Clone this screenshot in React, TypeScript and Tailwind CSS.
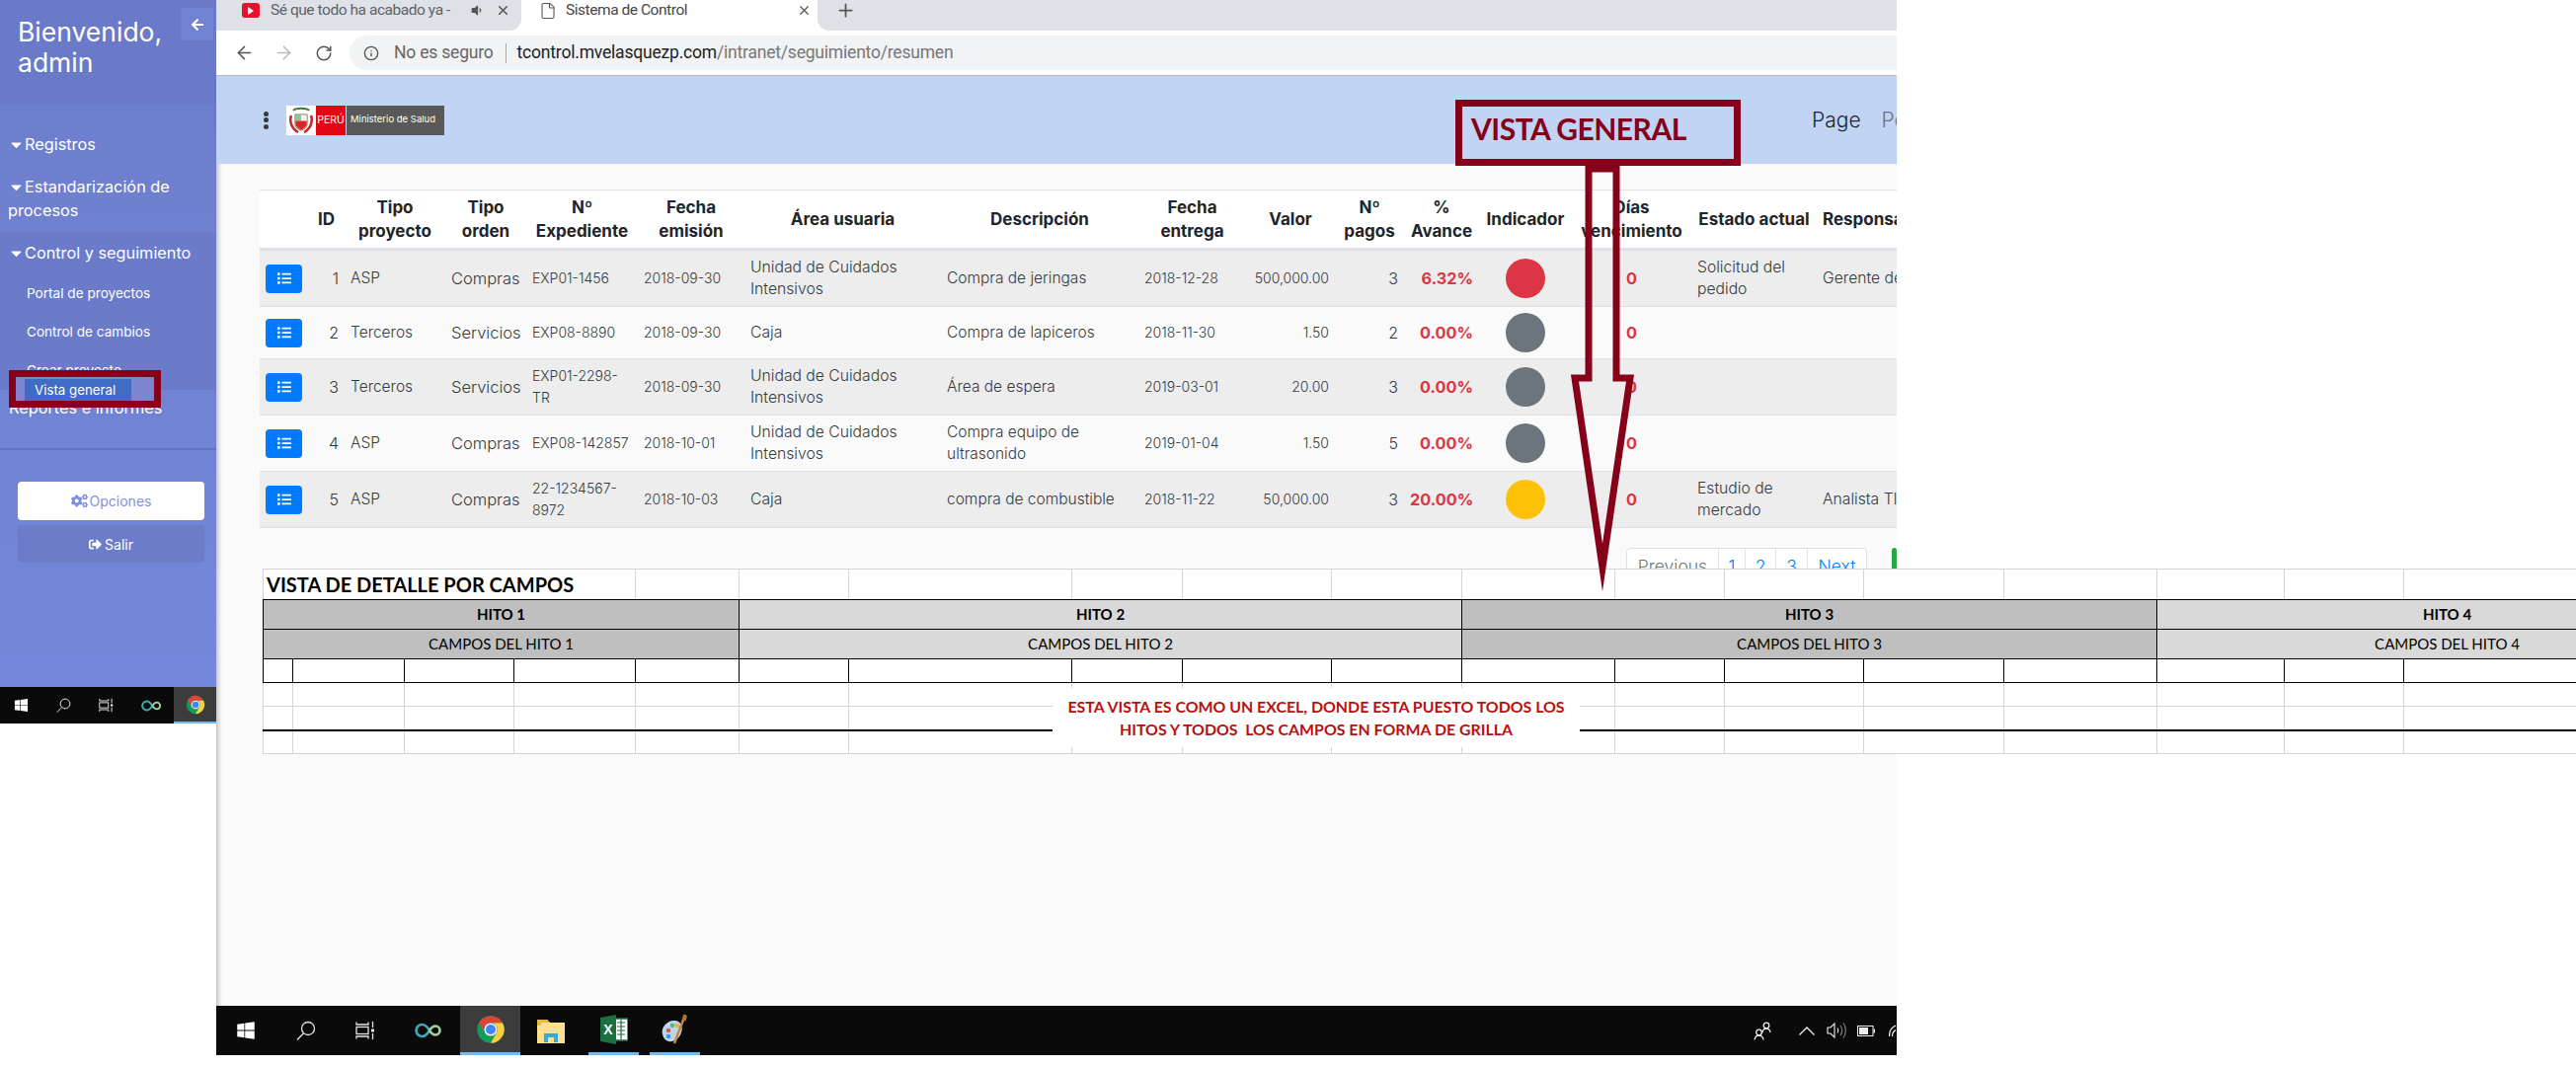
import { Fragment } from 'react';
import { ArrowLeft, ArrowRight, File, Info, Plus, RotateCw, X } from 'lucide-react';
import { FaArrowLeft, FaCaretDown, FaCogs, FaList, FaSignOutAlt, FaVolumeDown, FaWindows } from 'react-icons/fa';

type Row = {
  id: number;
  tipo: string;
  orden: string;
  exp: string;
  emision: string;
  area: string;
  desc: string;
  entrega: string;
  valor: string;
  pagos: number;
  avance: string;
  color: string;
  estado: string;
  resp: string;
};

const UCI = 'Unidad de Cuidados\nIntensivos';

const rows: Row[] = [
  { id: 1, tipo: 'ASP', orden: 'Compras', exp: 'EXP01-1456', emision: '2018-09-30', area: UCI, desc: 'Compra de jeringas', entrega: '2018-12-28', valor: '500,000.00', pagos: 3, avance: '6.32%', color: 'bg-[#dc3545]', estado: 'Solicitud del\npedido', resp: 'Gerente de compras' },
  { id: 2, tipo: 'Terceros', orden: 'Servicios', exp: 'EXP08-8890', emision: '2018-09-30', area: 'Caja', desc: 'Compra de lapiceros', entrega: '2018-11-30', valor: '1.50', pagos: 2, avance: '0.00%', color: 'bg-[#6c757d]', estado: '', resp: '' },
  { id: 3, tipo: 'Terceros', orden: 'Servicios', exp: 'EXP01-2298-\nTR', emision: '2018-09-30', area: UCI, desc: 'Área de espera', entrega: '2019-03-01', valor: '20.00', pagos: 3, avance: '0.00%', color: 'bg-[#6c757d]', estado: '', resp: '' },
  { id: 4, tipo: 'ASP', orden: 'Compras', exp: 'EXP08-142857', emision: '2018-10-01', area: UCI, desc: 'Compra equipo de\nultrasonido', entrega: '2019-01-04', valor: '1.50', pagos: 5, avance: '0.00%', color: 'bg-[#6c757d]', estado: '', resp: '' },
  { id: 5, tipo: 'ASP', orden: 'Compras', exp: '22-1234567-\n8972', emision: '2018-10-03', area: 'Caja', desc: 'compra de combustible', entrega: '2018-11-22', valor: '50,000.00', pagos: 3, avance: '20.00%', color: 'bg-[#ffc107]', estado: 'Estudio de\nmercado', resp: 'Analista TI' },
];

const rowHeights = ['h-[58px]', 'h-[53px]', 'h-[57px]', 'h-[57px]', 'h-[57px]'];
const colWidths = [49, 37, 102, 82, 113, 108, 199, 200, 109, 90, 70, 76, 94, 121, 127, 180];
const sheetCols = [30, 113, 111, 123, 105, 111, 226, 112, 151, 132, 155, 111, 141, 142, 155, 129, 121, 338];
const hitos = [
  { name: 'HITO 1', span: 5, bg: 'bg-[#bfbfbf]' },
  { name: 'HITO 2', span: 5, bg: 'bg-[#d9d9d9]' },
  { name: 'HITO 3', span: 5, bg: 'bg-[#bfbfbf]' },
  { name: 'HITO 4', span: 3, bg: 'bg-[#d9d9d9]' },
];

const ChromeIcon = ({ size }: { size: number }) => (
  <svg width={size} height={size} viewBox="0 0 48 48">
    <circle cx="24" cy="24" r="22" fill="#0f9d58" />
    <path d="M43.05 13A22 22 0 0 1 24 46L33.5 29.5A11 11 0 0 0 24 13Z" fill="#ffcd40" />
    <path d="M5 13A22 22 0 0 1 43.05 13L24 13A11 11 0 0 0 14.5 29.5Z" fill="#db4437" />
    <circle cx="24" cy="24" r="10.5" fill="#f1f1f1" />
    <circle cx="24" cy="24" r="8" fill="#4285f4" />
  </svg>
);

const InfinityIcon = ({ w, h }: { w: number; h: number }) => (
  <svg width={w} height={h} viewBox="0 0 28 16" fill="none" strokeWidth="2.6">
    <path d="M15 8C12 3 10 2 7.5 2a6 6 0 0 0 0 12c2.500 0 4.500-1 7.500-6" stroke="#3fa9b5" />
    <path d="M15 8c2-3 4-4.500 6-4.500a4.500 4.500 0 0 1 0 9c-2 0-4-1.500-6-4.500" stroke="#a3d39c" />
  </svg>
);

const SearchIcon = ({ size }: { size: number }) => (
  <svg width={size} height={size} viewBox="0 0 20 20" fill="none" stroke="#e5e5e5" strokeWidth="1.300">
    <circle cx="12" cy="8" r="6.500" />
    <path d="M7.500 12.800L1 19.500" />
  </svg>
);

const TaskViewIcon = ({ size }: { size: number }) => (
  <svg width={size} height={size} viewBox="0 0 20 20" fill="none" stroke="#e5e5e5" strokeWidth="1.300">
    <path d="M1 1.500V4h12V1.500M1 18.500V16h12v2.500" />
    <rect x="1" y="6.500" width="12" height="7" />
    <path d="M17.500 1v6M17.500 13v6" />
    <rect x="16" y="8.500" width="3" height="3" fill="#e5e5e5" stroke="none" />
  </svg>
);

const FolderIcon = () => (
  <svg width="28" height="26" viewBox="0 0 28 26">
    <path d="M0 2h10l3 3h15v21H0Z" fill="#fbe08e" />
    <path d="M0 2h10l3 3H4v3H0Z" fill="#eeb53f" />
    <path d="M7 25v-9h14v9h-4v-5h-6v5Z" fill="#3aa7dc" />
  </svg>
);

const ExcelIcon = () => (
  <svg width="28" height="30" viewBox="0 0 28 30">
    <rect x="13" y="4" width="15" height="22" fill="#fff" stroke="#1d6f42" strokeWidth="1.500" />
    <path d="M17 8h8M17 12h8M17 16h8M17 20h8M21 5v20" stroke="#1d6f42" strokeWidth="1.200" />
    <path d="M0 3L16 0v30L0 27Z" fill="#1d6f42" />
    <text x="8" y="20" textAnchor="middle" fontFamily="Liberation Sans, sans-serif" fontSize="14" fontWeight="700" fill="#fff">X</text>
  </svg>
);

const PaintIcon = () => (
  <svg width="29" height="32" viewBox="0 0 29 32">
    <path d="M2 21C0 14 7 6 15 7c6 1 8 6 6 12-2 7-8 10-13 9-3-1-5-3-6-7Z" fill="#b9d7ee" />
    <circle cx="8" cy="17" r="2.300" fill="#d9534f" />
    <circle cx="12" cy="12" r="2.300" fill="#5cb85c" />
    <circle cx="17" cy="12" r="2.300" fill="#f0ad4e" />
    <circle cx="8" cy="23" r="2.300" fill="#4a90d9" />
    <path d="M25 1L14 30" stroke="#c9863a" strokeWidth="2.500" />
    <path d="M23 1l4 1.500-1.500 5-3.500-1.500Z" fill="#a9743a" />
  </svg>
);

const PeopleIcon = () => (
  <svg width="18" height="19" viewBox="0 0 18 19" fill="none" stroke="#eee" strokeWidth="1.300">
    <circle cx="13" cy="4" r="2.800" />
    <path d="M9 11c.5-2.500 2-3.800 4-3.800s3.500 1.300 4 3.800" />
    <circle cx="5.500" cy="11" r="2.800" />
    <path d="M1 18.500c.5-2.800 2.300-4.300 4.500-4.300s4 1.500 4.500 4.300" />
  </svg>
);

const TrayIcons = () => (
  <div className="ml-auto flex items-center">
    <PeopleIcon />
    <svg className="ml-[28px]" width="16" height="9" viewBox="0 0 16 9" fill="none" stroke="#eee" strokeWidth="1.300">
      <path d="M0.500 8.500L8 1l7.500 7.500" />
    </svg>
    <svg className="ml-[12px]" width="20" height="18" viewBox="0 0 20 18" fill="none" stroke="#eee" strokeWidth="1.100">
      <path d="M1 6v6h3l4 4V2L4 6Z" />
      <path d="M11 6.500c1 1.500 1 3.500 0 5" />
      <path d="M14 4c2 3 2 7 0 10" stroke="#888" />
      <path d="M17 1.500c3 4 3 11 0 15" stroke="#888" />
    </svg>
    <svg className="ml-[11px]" width="18" height="11" viewBox="0 0 18 11">
      <rect x="0.500" y="0.500" width="15.500" height="10" fill="none" stroke="#eee" />
      <rect x="2" y="2" width="9" height="7" fill="#eee" />
      <rect x="16.500" y="3.500" width="1.500" height="4" fill="#eee" />
    </svg>
    <svg className="ml-[14px]" width="7" height="12" viewBox="0 0 7 12" fill="none" stroke="#eee" strokeWidth="1.200">
      <path d="M0.500 12C0.500 6 3 2.500 7 1M3.500 12C3.500 8.500 4.800 6.500 7 5.500" />
    </svg>
  </div>
);

const PeruLogo = () => (
  <div className="flex h-[30px] w-[160px] items-stretch">
    <div className="flex w-[30px] items-center justify-center bg-white">
      <svg width="24" height="28" viewBox="0 0 24 28">
        <path d="M4 4c2-3 14-3 16 0" fill="none" stroke="#3d7a3d" strokeWidth="2" />
        <path d="M6 8h12v10c0 3-3 5-6 6-3-1-6-3-6-6Z" fill="#fff" stroke="#7a5a2a" strokeWidth="1" />
        <rect x="6.500" y="8.500" width="5.500" height="6" fill="#8fc1a0" />
        <rect x="12" y="8.500" width="5.500" height="6" fill="#f3f3f3" />
        <path d="M6.500 14.500h11V18c0 2-3 4.500-5.500 5.500-2.500-1-5.500-3.500-5.500-5.500Z" fill="#d8262c" />
        <path d="M2 9c-2 6 0 13 7 17M22 9c2 6 0 13-7 17" fill="none" stroke="#c1272d" strokeWidth="2.500" />
      </svg>
    </div>
    <div className="flex w-[30px] items-center justify-center bg-[#e30613] text-[10.500px] text-white">PERÚ</div>
    <div className="ml-px flex flex-1 items-center bg-[#595959] pl-[4px] text-[9.500px] text-white">Ministerio de Salud</div>
  </div>
);

const Caret = () => <FaCaretDown size={17} className="inline-block align-[-3px]" />;

const Sidebar = () => (
  <aside className="h-[696px] w-[219px] bg-gradient-to-b from-[#6c7dcb] to-[#7587da] text-white">
    <div className="flex h-[105px] justify-between bg-[#6a7ac8] pl-[18px] pr-[3px]">
      <h1 className="pt-[17px] text-[26.500px] leading-[31px]">Bienvenido,<br />admin</h1>
      <button type="button" className="mt-[8px] flex h-[33px] w-[33px] items-center justify-center bg-[#7282d2] text-white">
        <FaArrowLeft size={14} />
      </button>
    </div>
    <nav className="pt-[29px] text-[16.300px] leading-[24px]">
      <a className="block pl-[8px]"><Caret />Registros</a>
      <a className="mt-[19px] block pl-[8px]"><Caret />Estandarización de procesos</a>
      <div className="mt-[10px] h-[160px] bg-[#6b7bc9] pt-[9px]">
        <a className="block pl-[8px]"><Caret />Control y seguimiento</a>
        <ul className="mt-[10px] pl-[27px] text-[13.600px] leading-[39px]">
          <li>Portal de proyectos</li>
          <li>Control de cambios</li>
          <li>Crear proyecto</li>
        </ul>
      </div>
      <a className="mt-[6px] block pl-[9px]">Reportes e informes</a>
    </nav>
    <div className="mt-[29px] h-[2px] bg-[#6272bd]" />
    <div className="mt-[32px] flex flex-col gap-[5px] px-[18px] pr-[12px] text-[14px]">
      <button type="button" className="flex h-[39px] items-center justify-center gap-[2px] rounded bg-white text-[#7f8fe0]">
        <FaCogs size={17} />Opciones
      </button>
      <button type="button" className="flex h-[38px] items-center justify-center gap-[3px] rounded bg-[#6c7cc9] text-white">
        <FaSignOutAlt size={13} />Salir
      </button>
    </div>
  </aside>
);

const LeftTaskbar = () => (
  <div className="flex h-[37px] w-[219px] items-center bg-[#0a0a0a] pl-[14px]">
    <FaWindows size={15} className="text-white" />
    <div className="ml-[28px]"><SearchIcon size={15} /></div>
    <div className="ml-[28px]"><TaskViewIcon size={15} /></div>
    <div className="ml-[28px]"><InfinityIcon w={21} h={12} /></div>
    <div className="ml-[12px] flex h-[37px] w-[43px] items-center justify-center border-b-2 border-[#76b9ed] bg-[#3c3c3c]">
      <ChromeIcon size={20} />
    </div>
  </div>
);

const BrowserChrome = () => (
  <Fragment>
    <div className="flex h-[31px] bg-white font-['Roboto',sans-serif] text-[15.500px] tracking-[-0.45px] text-[#45474a]">
      <div className="flex w-[309px] items-center rounded-br-xl bg-[#dee1e6] pb-[10px] pl-[26px]">
        <span className="flex h-[15px] w-[18px] items-center justify-center rounded-[3px] bg-[#e8112d]">
          <span className="border-y-[4px] border-l-[6px] border-y-transparent border-l-white" />
        </span>
        <span className="ml-[11px] w-[192px] overflow-hidden whitespace-nowrap text-[#5f6368]">Sé que todo ha acabado ya -</span>
        <FaVolumeDown size={13} className="ml-[10px] text-[#555]" />
        <X size={15} strokeWidth={2.500} className="ml-[13px] text-[#555]" />
      </div>
      <div className="flex w-[300px] items-center pb-[10px] pl-[18px]">
        <File size={18} strokeWidth={1.400} className="text-[#555]" />
        <span className="ml-[9px] w-[234px]">Sistema de Control</span>
        <X size={15} className="text-[#555]" />
      </div>
      <div className="flex flex-1 items-center rounded-bl-xl bg-[#dee1e6] pb-[10px] pl-[18px]">
        <Plus size={21} className="text-[#555]" />
      </div>
    </div>
    <div className="flex h-[46px] items-center border-b border-[#bbb] bg-white pl-[18px] font-['Roboto',sans-serif] text-[17.500px] tracking-[-0.2px]">
      <ArrowLeft size={21} strokeWidth={1.700} className="text-[#555]" />
      <ArrowRight size={21} strokeWidth={1.700} className="ml-[19px] text-[#bbb]" />
      <RotateCw size={18} strokeWidth={2} className="ml-[21px] text-[#555]" />
      <div className="ml-[17px] flex h-[35px] flex-1 items-center rounded-l-full bg-[#f1f3f4] pl-[14px]">
        <Info size={16} strokeWidth={2} className="text-[#555]" />
        <span className="ml-[15px] text-[#666]">No es seguro</span>
        <span className="ml-[12px] h-[20px] w-px bg-[#aaa]" />
        <span className="ml-[11px] text-[#222]">tcontrol.mvelasquezp.com<span className="text-[#777]">/intranet/seguimiento/resumen</span></span>
      </div>
    </div>
    <header className="flex h-[89px] items-center overflow-hidden bg-[#c1d4f4] pl-[48px] shadow-sm">
      <div className="flex h-[18px] flex-col justify-between">
        <span className="h-[5px] w-[5px] rounded-full bg-[#343a40]" />
        <span className="h-[5px] w-[5px] rounded-full bg-[#343a40]" />
        <span className="h-[5px] w-[5px] rounded-full bg-[#343a40]" />
      </div>
      <div className="ml-[18px]"><PeruLogo /></div>
      <nav className="ml-[1385px] flex gap-[21px] whitespace-nowrap text-[21px] font-light">
        <span className="text-[#212529]">Page</span>
        <span className="text-[#6c757d]">Perfil</span>
      </nav>
    </header>
  </Fragment>
);

const headers = ['', 'ID', 'Tipo\nproyecto', 'Tipo\norden', 'Nº\nExpediente', 'Fecha\nemisión', 'Área usuaria', 'Descripción', 'Fecha\nentrega', 'Valor', 'Nº\npagos', '%\nAvance', 'Indicador', 'Días\nvencimiento', 'Estado actual', 'Responsable'];

const ProjectsTable = () => (
  <table className="w-[1757px] table-fixed border-collapse text-[14px] font-light leading-[22px] text-[#343a40]">
    <colgroup>
      {colWidths.map((w, i) => <col key={i} style={{ width: w }} />)}
    </colgroup>
    <thead>
      <tr className="h-[60px] border-y border-b-[3px] border-y-[#dee2e6] bg-white">
        {headers.map((h, i) => (
          <th key={i} className={`whitespace-pre-line px-[2px] text-[17px] font-bold leading-[24px] text-[#212529] ${i === 15 ? 'pl-[6px] text-left' : 'text-center'}`}>{h}</th>
        ))}
      </tr>
    </thead>
    <tbody>
      {rows.map((r, i) => (
        <tr key={r.id} className={`${rowHeights[i]} border-b border-[#dee2e6] ${i % 2 === 0 ? 'bg-[#ededed]' : 'bg-[#fafafa]'}`}>
          <td className="px-[6px]">
            <button type="button" className="flex h-[29px] w-[37px] items-center justify-center rounded-[4px] bg-[#007bff] text-white">
              <FaList size={14} />
            </button>
          </td>
          <td className="px-[6px] text-right text-[16px]">{r.id}</td>
          <td className="px-[6px] text-[15.500px]">{r.tipo}</td>
          <td className="px-[6px] text-[16.500px]">{r.orden}</td>
          <td className="whitespace-pre-line px-[6px]">{r.exp}</td>
          <td className="px-[6px]">{r.emision}</td>
          <td className="whitespace-pre-line px-[6px] text-[15.700px]">{r.area}</td>
          <td className="whitespace-pre-line px-[6px] text-[15.500px]">{r.desc}</td>
          <td className="px-[6px]">{r.entrega}</td>
          <td className="px-[6px] text-right">{r.valor}</td>
          <td className="px-[6px] text-right text-[16px]">{r.pagos}</td>
          <td className="px-[6px] text-right text-[16.300px] font-bold text-[#dc3545]">{r.avance}</td>
          <td className="px-[6px]"><div className={`mx-auto h-[40px] w-[40px] rounded-full ${r.color}`} /></td>
          <td className="px-[6px] text-center text-[16.300px] font-bold text-[#dc3545]">0</td>
          <td className="whitespace-pre-line px-[6px] text-[15.700px]">{r.estado}</td>
          <td className="whitespace-nowrap px-[6px] text-[15.700px]">{r.resp}</td>
        </tr>
      ))}
    </tbody>
  </table>
);

const Pagination = () => (
  <div className="mt-[20px] flex h-[38px] items-start pl-[1384px] text-[17.500px] font-light">
    <div className="flex h-[38px] rounded-[4px] border border-[#dee2e6] bg-white">
      <span className="flex w-[93px] items-center justify-center border-r border-[#dee2e6] text-[#6c757d]">Previous</span>
      <span className="flex w-[27px] items-center justify-center border-r border-[#dee2e6] text-[#007bff]">1</span>
      <span className="flex w-[31px] items-center justify-center border-r border-[#dee2e6] text-[#007bff]">2</span>
      <span className="flex w-[32px] items-center justify-center border-r border-[#dee2e6] text-[#007bff]">3</span>
      <span className="flex w-[59px] items-center justify-center text-[#007bff]">Next</span>
    </div>
    <div className="ml-[25px] h-[38px] w-[80px] rounded-[4px] bg-[#28a745]" />
  </div>
);

const DetailSheet = () => (
  <table className="relative ml-[3px] -mt-[17px] w-[2506px] table-fixed border-collapse bg-white font-['Lato',sans-serif] text-[15px] text-black">
    <colgroup>
      {sheetCols.map((w, i) => <col key={i} style={{ width: w }} />)}
    </colgroup>
    <tbody>
      <tr className="h-[29px]">
        <td colSpan={4} className="whitespace-nowrap border border-[#d4d4d4] border-b-black pl-[3px] text-[20px] font-bold">VISTA DE DETALLE POR CAMPOS</td>
        {sheetCols.slice(4).map((_, i) => <td key={i} className="border border-[#d4d4d4] border-b-black" />)}
      </tr>
      <tr className="h-[30px]">
        {hitos.map((h) => (
          <td key={h.name} colSpan={h.span} className={`border border-black text-center font-bold ${h.bg}`}>{h.name}</td>
        ))}
      </tr>
      <tr className="h-[30px]">
        {hitos.map((h, i) => (
          <td key={h.name} colSpan={h.span} className={`border border-black text-center ${h.bg}`}>CAMPOS DEL HITO {i + 1}</td>
        ))}
      </tr>
      <tr className="h-[24px]">
        {sheetCols.map((_, i) => <td key={i} className="border border-black" />)}
      </tr>
      {[0, 1, 2].map((r) => (
        <tr key={r} className="h-[24px]">
          {sheetCols.map((_, i) => (
            <td key={i} className={`border border-[#d4d4d4] ${r === 0 ? 'border-t-black' : ''} ${r === 1 ? 'border-b-2 border-b-black' : ''} ${r === 2 ? 'border-t-2 border-t-black' : ''}`} />
          ))}
        </tr>
      ))}
    </tbody>
  </table>
);

const MainTaskbar = () => (
  <div className="flex h-[50px] items-center bg-[#0a0a0a] pl-[20px] pr-[1px]">
    <FaWindows size={20} className="text-white" />
    <div className="ml-[41px]"><SearchIcon size={20} /></div>
    <div className="ml-[40px]"><TaskViewIcon size={20} /></div>
    <div className="ml-[40px]"><InfinityIcon w={28} h={16} /></div>
    <div className="ml-[18px] flex h-[50px] w-[61px] items-center justify-center border-b-[3px] border-[#76b9ed] bg-[#3c3c3c]">
      <ChromeIcon size={30} />
    </div>
    <div className="ml-[17px]"><FolderIcon /></div>
    <div className="ml-[24px] flex h-[50px] w-[51px] items-center justify-center border-b-[3px] border-[#76b9ed]"><ExcelIcon /></div>
    <div className="ml-[11px] flex h-[50px] w-[51px] items-center justify-center border-b-[3px] border-[#76b9ed]"><PaintIcon /></div>
    <TrayIcons />
  </div>
);

export default function App() {
  return (
    <div className="relative flex h-[1080px] w-[2609px] overflow-hidden bg-white font-['Inter',sans-serif]">
      <div className="w-[219px] shrink-0">
        <Sidebar />
        <LeftTaskbar />
      </div>
      <main className="w-[1702px] shrink-0">
        <BrowserChrome />
        <section className="h-[853px] bg-[#fafafa] pl-[44px] pt-[26px] shadow-[inset_6px_0_5px_-4px_rgba(0,0,0,0.25)]">
          <div className="w-[1658px] overflow-hidden">
            <ProjectsTable />
            <Pagination />
          </div>
          <DetailSheet />
        </section>
        <MainTaskbar />
      </main>

      {/* anotaciones encima de la captura */}
      <div className="absolute left-[9px] top-[375px] h-[38px] w-[154px] border-[7px] border-[#86001a] bg-[#7c86cf]">
        <div className="ml-[9px] mt-[2px] h-[22px] w-[108px] bg-[#3f6cc4] pl-[10px] text-[13.300px] leading-[22px] text-white">Vista general</div>
      </div>
      <div className="absolute left-[1474px] top-[101px] flex h-[67px] w-[289px] items-center border-[7px] border-[#86001a] pb-[8px] pl-[9px] font-['Lato',sans-serif] text-[30px] font-bold tracking-[-0.5px] text-[#86001a]">
        VISTA GENERAL
      </div>
      <svg className="absolute left-[1585px] top-[165px]" width="80" height="440" viewBox="0 0 80 440" fill="none">
        <path d="M24 6H52V218H66L38 410L10 218H24Z" stroke="#86001a" strokeWidth="7" strokeMiterlimit="12" />
      </svg>
      <div className="absolute left-[1066px] top-[697px] flex h-[60px] w-[534px] flex-col items-center justify-center whitespace-pre bg-white font-['Lato',sans-serif] text-[15.900px] font-bold leading-[23px] text-[#b80f0f]">
        <span>ESTA VISTA ES COMO UN EXCEL, DONDE ESTA PUESTO TODOS LOS</span>
        <span>HITOS Y TODOS  LOS CAMPOS EN FORMA DE GRILLA</span>
      </div>
    </div>
  );
}
